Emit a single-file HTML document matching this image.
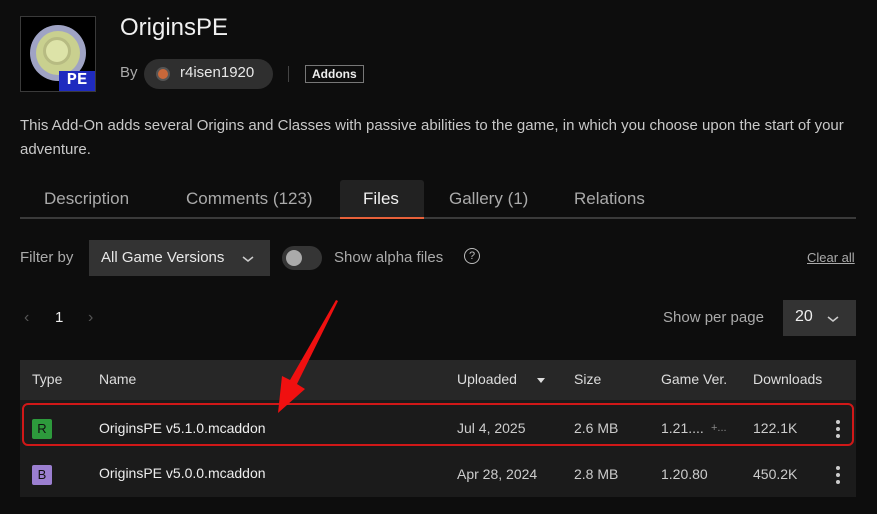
<!DOCTYPE html>
<html><head><meta charset="utf-8"><style>
*{margin:0;padding:0;box-sizing:border-box}
body{width:877px;height:514px;background:#0d0d0d;font-family:"Liberation Sans",sans-serif;color:#e8e8e8;position:relative;overflow:hidden}
.a{position:absolute;white-space:nowrap}
.t{font-size:17px;top:189px}
</style></head><body>
<div class="a" style="left:20px;top:16px;width:76px;height:76px;border:1px solid #3a3a3a;background:#000;overflow:hidden">
 <div style="position:absolute;left:9px;top:8px;width:56px;height:56px;border-radius:50%;background:#9fa3c4"></div>
 <div style="position:absolute;left:15px;top:14px;width:44px;height:44px;border-radius:50%;background:#c9d08f"></div>
 <div style="position:absolute;left:22px;top:20px;width:28px;height:28px;border-radius:50%;background:#dde3a8;border:3px solid #b7bb82"></div>
 <div style="position:absolute;left:38px;top:54px;width:36px;height:20px;background:#1f2bbf;color:#fff;font:bold 17px 'Liberation Mono',monospace;text-align:center;line-height:20px">PE</div>
</div>
<div class="a" style="left:120px;top:14px;font-size:24px;color:#f0f0f0">OriginsPE</div>
<div class="a" style="left:120px;top:64px;font-size:15px;color:#aaa">By</div>
<div class="a" style="left:144px;top:59px;width:129px;height:30px;border-radius:15px;background:#2f2f2f"></div>
<div class="a" style="left:156px;top:67px;width:14px;height:14px;border-radius:50%;background:#c9683a;border:2px solid #555"></div>
<div class="a" style="left:180px;top:64px;font-size:15px;color:#e8e8e8">r4isen1920</div>
<div class="a" style="left:288px;top:66px;width:1px;height:16px;background:#444"></div>
<div class="a" style="left:305px;top:65px;height:18px;padding:0 6px;border:1px solid #777;font-size:12px;font-weight:bold;line-height:16px;color:#eee">Addons</div>
<div class="a" style="left:20px;top:114px;font-size:15px;line-height:24px;color:#c8c8c8;white-space:normal;width:845px">This Add-On adds several Origins and Classes with passive abilities to the game, in which you choose upon the start of your adventure.</div>
<div class="a" style="left:20px;top:217px;width:836px;height:2px;background:#3a3a3a"></div>
<div class="a" style="left:340px;top:180px;width:84px;height:39px;background:#222;border-radius:3px 3px 0 0;border-bottom:2px solid #e8613a"></div>
<div class="a t" style="left:44px;color:#aaa">Description</div>
<div class="a t" style="left:186px;color:#aaa">Comments (123)</div>
<div class="a t" style="left:363px;color:#f0f0f0">Files</div>
<div class="a t" style="left:449px;color:#aaa">Gallery (1)</div>
<div class="a t" style="left:574px;color:#aaa">Relations</div>
<div class="a" style="left:20px;top:249px;font-size:15px;color:#aaa">Filter by</div>
<div class="a" style="left:89px;top:240px;width:181px;height:36px;background:#333"></div>
<div class="a" style="left:101px;top:249px;font-size:15px;color:#e8e8e8">All Game Versions</div>
<svg class="a" style="left:241px;top:254px" width="14" height="10"><path d="M2 3l5 4 5-4" stroke="#ccc" stroke-width="1.5" fill="none"/></svg>
<div class="a" style="left:282px;top:246px;width:40px;height:24px;border-radius:12px;background:#353535"></div>
<div class="a" style="left:286px;top:250px;width:16px;height:16px;border-radius:50%;background:#aaa"></div>
<div class="a" style="left:334px;top:249px;font-size:15px;color:#aaa">Show alpha files</div>
<div class="a" style="left:464px;top:248px;width:16px;height:16px;border-radius:50%;border:1.5px solid #bbb;font-size:11px;text-align:center;line-height:14px;color:#bbb">?</div>
<div class="a" style="left:807px;top:250px;font-size:13px;color:#aaa;text-decoration:underline">Clear all</div>
<div class="a" style="left:24px;top:309px;font-size:16px;color:#555">‹</div>
<div class="a" style="left:55px;top:309px;font-size:15px;color:#eee">1</div>
<div class="a" style="left:88px;top:309px;font-size:16px;color:#555">›</div>
<div class="a" style="left:663px;top:309px;font-size:15px;color:#aaa">Show per page</div>
<div class="a" style="left:783px;top:300px;width:73px;height:36px;background:#333"></div>
<div class="a" style="left:795px;top:308px;font-size:16px;color:#eee">20</div>
<svg class="a" style="left:826px;top:314px" width="14" height="10"><path d="M2 3l5 4 5-4" stroke="#ccc" stroke-width="1.5" fill="none"/></svg>
<div class="a" style="left:20px;top:360px;width:836px;height:40px;background:#272727"></div>
<div class="a" style="left:20px;top:400px;width:836px;height:97px;background:#1b1b1b"></div>
<div class="a" style="left:32px;top:371px;font-size:14px;color:#ddd">Type</div>
<div class="a" style="left:99px;top:371px;font-size:14px;color:#ddd">Name</div>
<div class="a" style="left:457px;top:371px;font-size:14px;color:#ddd">Uploaded</div>
<svg class="a" style="left:536px;top:376px" width="10" height="8"><path d="M1 2h8l-4 5z" fill="#ddd"/></svg>
<div class="a" style="left:574px;top:371px;font-size:14px;color:#ddd">Size</div>
<div class="a" style="left:661px;top:371px;font-size:14px;color:#ddd">Game Ver.</div>
<div class="a" style="left:753px;top:371px;font-size:14px;color:#ddd">Downloads</div>
<div class="a" style="left:22px;top:403px;width:832px;height:43px;border:2px solid #d01818;border-radius:6px"></div>
<div class="a" style="left:32px;top:419px;width:20px;height:20px;background:#2d9a3c;border-radius:2px;font-size:13px;color:#111;text-align:center;line-height:20px">R</div>
<div class="a" style="left:99px;top:420px;font-size:14px;color:#eee">OriginsPE v5.1.0.mcaddon</div>
<div class="a" style="left:457px;top:420px;font-size:14px;color:#ccc">Jul 4, 2025</div>
<div class="a" style="left:574px;top:420px;font-size:14px;color:#ccc">2.6 MB</div>
<div class="a" style="left:661px;top:420px;font-size:14px;color:#ccc">1.21....</div>
<div class="a" style="left:711px;top:422px;font-size:11px;color:#888">+...</div>
<div class="a" style="left:753px;top:420px;font-size:14px;color:#ccc">122.1K</div>
<div class="a" style="left:32px;top:465px;width:20px;height:20px;background:#9b7fd0;border-radius:2px;font-size:13px;color:#111;text-align:center;line-height:20px">B</div>
<div class="a" style="left:99px;top:465px;font-size:14px;color:#eee">OriginsPE v5.0.0.mcaddon</div>
<div class="a" style="left:457px;top:466px;font-size:14px;color:#ccc">Apr 28, 2024</div>
<div class="a" style="left:574px;top:466px;font-size:14px;color:#ccc">2.8 MB</div>
<div class="a" style="left:661px;top:466px;font-size:14px;color:#ccc">1.20.80</div>
<div class="a" style="left:753px;top:466px;font-size:14px;color:#ccc">450.2K</div>
<svg class="a" style="left:834px;top:419px" width="8" height="80"><circle cx="4" cy="3" r="2" fill="#ccc"/><circle cx="4" cy="10" r="2" fill="#ccc"/><circle cx="4" cy="17" r="2" fill="#ccc"/><circle cx="4" cy="49" r="2" fill="#ccc"/><circle cx="4" cy="56" r="2" fill="#ccc"/><circle cx="4" cy="63" r="2" fill="#ccc"/></svg>
<svg class="a" style="left:0;top:0" width="877" height="514"><path d="M338 301L297 384L305 389L278 413L282 376L290 380L336 300Z" fill="#f01010"/></svg>
</body></html>
